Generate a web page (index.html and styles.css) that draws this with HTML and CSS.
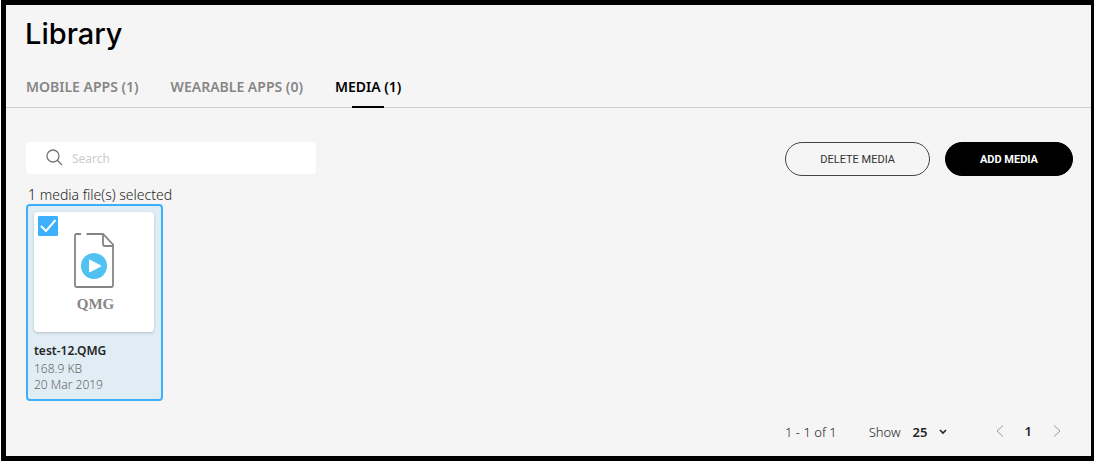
FILE: index.html
```html
<!DOCTYPE html>
<html lang="en">
<head>
<meta charset="utf-8">
<title>Library</title>
<link rel="stylesheet" href="styles.css">
</head>
<body>
<div class="frame">
  <header class="header">
    <h1 class="title">Library</h1>
    <nav class="tabs">
      <a class="tab" href="#mobile">MOBILE APPS (1)</a>
      <a class="tab" href="#wearable">WEARABLE APPS (0)</a>
      <a class="tab tab-active" href="#media" aria-current="page">MEDIA (1)</a>
    </nav>
  </header>
  <main class="content">
    <div class="toolbar">
      <label class="search">
        <svg class="search-icon" viewBox="0 0 18 18" aria-hidden="true"><circle cx="7" cy="7" r="6"/><path d="M11.300 11.300 16 16"/></svg>
        <input class="search-input" type="search" placeholder="Search" aria-label="Search">
      </label>
      <div class="actions">
        <button class="button" type="button">DELETE MEDIA</button>
        <button class="button button-primary" type="button">ADD MEDIA</button>
      </div>
    </div>
    <p class="selected-count">1 media file(s) selected</p>
    <label class="card">
      <span class="thumb">
        <input class="check" type="checkbox" checked aria-label="Select test-12.QMG">
        <svg class="check-mark" viewBox="0 0 20 20" aria-hidden="true"><path d="M3 10 8 15 17.500 4"/></svg>
        <svg class="file-icon" viewBox="0 0 40 56" aria-hidden="true">
          <path class="file-line" d="M7 1H2.500Q1 1 1 2.500V52.500Q1 54 2.500 54H37Q39 54 39 52V11.500L29 1H12.500"/>
          <path class="file-line" d="M29 1V11Q29 13 31 13H39"/>
          <circle cx="20" cy="33" r="13" fill="#50c1f0"/>
          <path d="M15.500 27 27 33 15.500 39Z" fill="#fff" stroke="#fff" stroke-linejoin="round"/>
        </svg>
        <span class="file-type">QMG</span>
      </span>
      <span class="file-name">test-12.QMG</span>
      <span class="file-meta">168.9 KB</span>
      <span class="file-meta">20 Mar 2019</span>
    </label>
    <footer class="pager">
      <span class="range">1 - 1 of 1</span>
      <label class="show" for="page-size">Show</label>
      <span class="size">
        <select class="size-select" id="page-size"><option>25</option></select>
        <svg class="size-arrow" viewBox="0 0 8 6" aria-hidden="true"><path d="M1 1 4 4 7 1"/></svg>
      </span>
      <span class="steps">
        <button class="page-step" type="button" aria-label="Previous page"><svg viewBox="0 0 8 12" aria-hidden="true"><path d="M7 .5 1 6 7 11.500"/></svg></button>
        <span class="page">1</span>
        <button class="page-step" type="button" aria-label="Next page"><svg viewBox="0 0 8 12" aria-hidden="true"><path d="M1 .5 7 6 1 11.500"/></svg></button>
      </span>
    </footer>
  </main>
</div>
</body>
</html>
```
FILE: styles.css
```css
* { box-sizing: border-box; }
body {
  margin: 0;
  padding-left: 1px;
  background: #fff;
  font-family: "Noto Sans", "Open Sans", sans-serif;
  color: #252525;
}
.frame {
  min-height: 100vh;
  border: 5px solid #000;
  border-right-width: 3px;
  background: #f5f5f5;
}
.header { border-bottom: 1px solid #ccc; }
.title {
  margin: 0;
  padding: 12px 19px 0;
  font: 500 29px/34px Inter, sans-serif;
  color: #000;
}
.tabs {
  display: flex;
  gap: 32px;
  margin-bottom: -1px;
  padding: 26px 20px 0;
}
.tab {
  display: flex;
  flex-direction: column;
  align-items: center;
  height: 31px;
  font: 600 14px/20px "Noto Sans", sans-serif;
  color: #868686;
  text-decoration: none;
}
.tab-active { color: #000; }
.tab-active::after {
  content: "";
  width: 32px;
  height: 2px;
  margin-top: 9px;
  background: #000;
}
.content { padding: 34px 18px 0 20px; }
.toolbar {
  display: flex;
  justify-content: space-between;
  align-items: flex-start;
}
.search {
  display: flex;
  align-items: center;
  gap: 8px;
  width: 290px;
  height: 32px;
  padding-left: 20px;
  border-radius: 4px;
  background: #fff;
}
.search-icon {
  width: 18px;
  height: 18px;
  fill: none;
  stroke: #757575;
  stroke-width: 1.3;
}
.search-input {
  flex: 1;
  min-width: 0;
  padding: 2px 0 0;
  border: 0;
  outline: 0;
  background: none;
  font: 400 12px/20px "Noto Sans", sans-serif;
}
.search-input::placeholder { color: #ccc; }
.actions { display: flex; gap: 15px; }
.button {
  height: 34px;
  padding: 2px 34px 0;
  border: 1px solid #444;
  border-radius: 17px;
  background: none;
  font: 400 11px/20px Roboto, sans-serif;
  color: #333;
}
.button-primary {
  border-color: #000;
  background: #000;
  font-weight: 700;
  color: #fff;
}
.selected-count {
  margin: 0;
  padding: 10px 2px 0;
  font: 300 14px/18px "Noto Sans", sans-serif;
}
.card {
  display: flex;
  flex-direction: column;
  width: 137px;
  height: 197px;
  padding: 6px;
  border: 2px solid #3cb0ff;
  border-radius: 4px;
  background: #e0edf5;
}
.thumb {
  position: relative;
  display: flex;
  flex-direction: column;
  align-items: center;
  width: 120px;
  height: 120px;
  margin-bottom: 10px;
  padding-top: 21px;
  border-radius: 4px;
  background: #fff;
  box-shadow: 0 1px 3px rgba(0, 0, 0, .2);
}
.check,
.check-mark {
  position: absolute;
  top: 4px;
  left: 4px;
  width: 20px;
  height: 20px;
}
.check {
  margin: 0;
  border: 1px solid #3cb0ff;
  border-radius: 1px;
  background: #fff;
  appearance: none;
}
.check:checked { background: #3cb0ff; }
.check-mark {
  fill: none;
  stroke: #fff;
  stroke-width: 2;
  pointer-events: none;
}
.file-icon { width: 40px; height: 56px; }
.file-line { fill: none; stroke: #858585; stroke-width: 1.8; }
.file-type {
  margin: 5px 0 0 3px;
  font: 700 15px/20px "Liberation Serif", serif;
  color: #858585;
}
.file-name { font-size: 12px; font-weight: 600; line-height: 18px; }
.file-meta {
  padding-top: 1px;
  font-size: 12px;
  font-weight: 300;
  line-height: 15px;
  color: #666;
}
.pager {
  display: flex;
  align-items: center;
  justify-content: flex-end;
  height: 34px;
  margin-top: 14px;
  padding-right: 12px;
  font-size: 13px;
  font-weight: 300;
}
.show { margin-left: 32px; }
.size { display: flex; align-items: center; margin-left: 12px; }
.size-select {
  width: 26px;
  padding: 0;
  border: 0;
  background: none;
  font: 600 13px/20px "Noto Sans", sans-serif;
  color: #252525;
  appearance: none;
}
.size-arrow { width: 8px; height: 6px; fill: none; stroke: #252525; stroke-width: 1.6; }
.steps {
  display: flex;
  align-items: center;
  gap: 21px;
  margin-left: 49px;
  padding-bottom: 3px;
}
.page-step {
  display: flex;
  padding: 0;
  border: 0;
  background: none;
}
.page-step svg { width: 8px; height: 12px; fill: none; stroke: #999; stroke-width: 1; }
.page { font-weight: 600; }
```
